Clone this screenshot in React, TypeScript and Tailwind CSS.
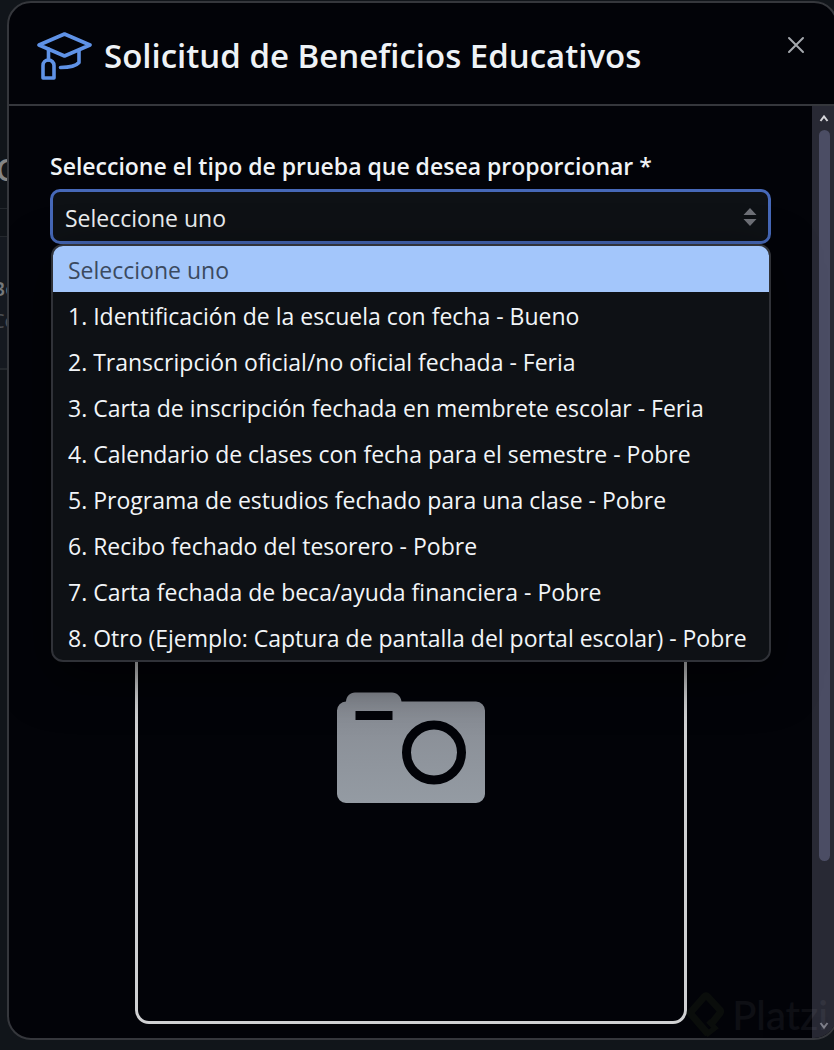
import React, { useState } from 'react';

const PLACEHOLDER = 'Seleccione uno';

const proofTypes = [
  '1. Identificación de la escuela con fecha - Bueno',
  '2. Transcripción oficial/no oficial fechada - Feria',
  '3. Carta de inscripción fechada en membrete escolar - Feria',
  '4. Calendario de clases con fecha para el semestre - Pobre',
  '5. Programa de estudios fechado para una clase - Pobre',
  '6. Recibo fechado del tesorero - Pobre',
  '7. Carta fechada de beca/ayuda financiera - Pobre',
  '8. Otro (Ejemplo: Captura de pantalla del portal escolar) - Pobre',
];

const options = [PLACEHOLDER, ...proofTypes];

const GraduationIcon = () => (
  <svg
    width="56"
    height="50"
    viewBox="0 0 56 50"
    fill="none"
    stroke="#5f92e6"
    strokeWidth="3.6"
    strokeLinecap="round"
    strokeLinejoin="round"
    className="shrink-0"
    aria-hidden="true"
  >
    <path d="M3 14 28.500 3 54 14 28.500 25Z" />
    <path d="M12.500 18v11" />
    <path d="M7 47V34.500a5.500 5.500 0 0 1 11 0V47Z" />
    <path d="M43 20v11.500c-3 3.500-9 5-18.500 5" />
  </svg>
);

const CameraIcon = () => (
  <svg width="148" height="111" viewBox="0 0 148 111" aria-hidden="true">
    <defs>
      <linearGradient id="camera-fill" x1="0" y1="0" x2="0" y2="1">
        <stop offset="0" stopColor="#868a92" />
        <stop offset="1" stopColor="#949ba3" />
      </linearGradient>
    </defs>
    <path
      fill="url(#camera-fill)"
      d="M9 9.500C9.500 4 13 .500 18 .500h37c5 0 9 4 9.500 9H139a9 9 0 0 1 9 9V102a9 9 0 0 1-9 9H9a9 9 0 0 1-9-9V18.500a9 9 0 0 1 9-9Z"
    />
    <path fill="#020308" d="M18.500 19h37v9h-37z" />
    <circle cx="97" cy="60.500" r="27.500" fill="none" stroke="#020308" strokeWidth="9" />
  </svg>
);

const Watermark = () => (
  <div className="pointer-events-none absolute right-2 bottom-0 flex items-center gap-2 opacity-5">
    <svg width="38" height="46" viewBox="0 0 38 46" fill="none" stroke="#98ca3f" strokeWidth="7" aria-hidden="true">
      <path d="M26 31 34 21Q35 19 34 18L22 5Q20 3 18 5L4 21 22 42" strokeLinejoin="round" />
      <path d="M20 43 29 36 22 29" strokeWidth="5" />
    </svg>
    <span className="font-[Lato] text-[40px] leading-none font-medium text-slate-200">Platzi</span>
  </div>
);

const Scrollbar = () => (
  <div className="flex w-6 shrink-0 flex-col items-center bg-[#282934] pt-2 pb-2" aria-hidden="true">
    <svg width="10" height="8" viewBox="0 0 10 8" fill="none" stroke="#d4d4d8" strokeWidth="2">
      <path d="M1.500 7 5 2.500 8.500 7" />
    </svg>
    <div className="mt-2 h-[731px] w-[11px] rounded-full bg-[#4b4d64]" />
    <svg className="mt-auto" width="10" height="8" viewBox="0 0 10 8" fill="none" stroke="#7b7c86" strokeWidth="2">
      <path d="M1.500 1 5 5.500 8.500 1" />
    </svg>
  </div>
);

// Account page that stays visible behind the dialog
const PageBehind = () => (
  <div className="min-h-screen bg-[#11151a] pt-[150px]">
    <div className="h-[59px] border-b border-[#24282d] text-3xl leading-10 font-semibold text-[#858585]">
      <p className="-ml-1">C</p>
    </div>
    <div className="h-7 border-b border-[#24282d]" />
    <div className="h-[133px] border-b-2 border-[#24282d] bg-[#151920] pt-9">
      <p className="-ml-2 text-xl leading-8 font-semibold text-[#77797c]">Be</p>
      <p className="-ml-2 text-xl leading-8 text-[#4b4e53]">Co</p>
    </div>
  </div>
);

const App: React.FC = () => {
  const [selected, setSelected] = useState(PLACEHOLDER);
  const [open, setOpen] = useState(true);

  const handlePick = (value: string) => {
    setSelected(value);
    setOpen(false);
  };

  return (
    <div className="relative min-h-screen overflow-hidden font-['Open_Sans',sans-serif]">
      <PageBehind />

      <div
        role="dialog"
        aria-labelledby="dialog-title"
        className="absolute inset-0 mt-px -mr-1 mb-[10px] ml-[7px] flex flex-col overflow-hidden rounded-3xl border-2 border-[#35373c] bg-[#020308]"
      >
        <header className="flex items-start border-b-2 border-[#35373c] pt-7 pr-[26px] pb-[23px] pl-[27px]">
          <GraduationIcon />
          <h1 id="dialog-title" className="ml-3 text-[33px] leading-[50px] font-semibold text-[#eef2f6]">
            Solicitud de Beneficios Educativos
          </h1>
          <button type="button" aria-label="Cerrar" className="ml-auto p-1">
            <svg width="20" height="20" viewBox="0 0 20 20" stroke="#a4a8ad" strokeWidth="2" strokeLinecap="round">
              <path d="M3 3 17 17M17 3 3 17" />
            </svg>
          </button>
        </header>

        <div className="flex min-h-0 flex-1">
          <div className="flex flex-1 flex-col pt-11 pr-[41px] pb-[14px] pl-[41px]">
            <label htmlFor="proof-type" className="text-[23px] leading-8 font-semibold text-[#f0f3f6]">
              Seleccione el tipo de prueba que desea proporcionar *
            </label>

            <div className="relative mt-[7px]">
              <select
                id="proof-type"
                value={selected}
                onChange={(e) => handlePick(e.target.value)}
                className="h-[55px] w-full appearance-none rounded-[10px] border-3 border-[#4668b8] bg-[#0e1115] px-3 pt-[3px] text-[23px] text-[#eceff2] outline-none"
              >
                {options.map((opt) => (
                  <option key={opt} value={opt}>{opt}</option>
                ))}
              </select>
              <svg
                className="pointer-events-none absolute top-[19px] right-[14px]"
                width="14"
                height="18"
                viewBox="0 0 14 18"
                fill="#6e7077"
                aria-hidden="true"
              >
                <path d="M7 0 13.500 7H.500ZM7 18 .500 11h13Z" />
              </svg>

              {open && (
                <ul
                  role="listbox"
                  aria-label="Tipo de prueba"
                  className="absolute top-full right-0 left-px z-10 overflow-hidden rounded-xl border-2 border-[#303238] bg-[#0e1115] shadow-[0_16px_48px_rgba(0,0,0,0.6)]"
                >
                  {options.map((opt) => (
                    <li
                      key={opt}
                      role="option"
                      aria-selected={opt === selected}
                      onClick={() => handlePick(opt)}
                      className={`cursor-pointer px-[15px] pt-[2px] text-[23px] leading-[44px] whitespace-nowrap ${
                        opt === selected ? 'bg-[#a3c6fb] text-[#3b4a60]' : 'text-[#f2f5f8]'
                      }`}
                    >
                      {opt}
                    </li>
                  ))}
                </ul>
              )}
            </div>

            <div className="mx-auto mt-[340px] flex w-full max-w-[552px] flex-1 justify-center rounded-[14px] border-3 border-[#d0d1d3] pt-[105px]">
              <CameraIcon />
            </div>
          </div>

          <Scrollbar />
        </div>

        <Watermark />
      </div>
    </div>
  );
};

export default App;
